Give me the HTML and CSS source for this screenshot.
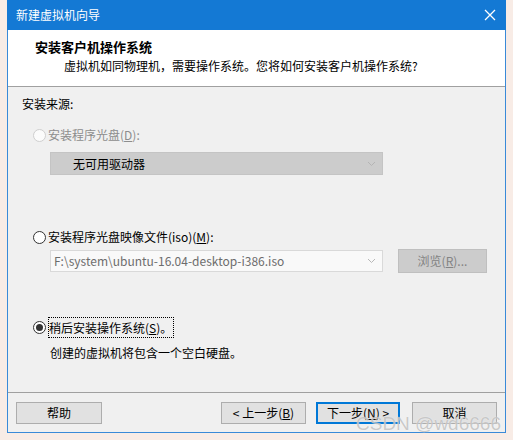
FILE: index.html
```html
<!DOCTYPE html>
<html lang="zh-CN">
<head>
    <meta charset="UTF-8">
    <meta name="viewport" content="width=device-width, initial-scale=1.0">
    <title>新建虚拟机向导</title>
    <link rel="stylesheet" href="styles.css">
</head>
<body>
    <div class="window">
        <div class="titlebar">
            <span class="title">新建虚拟机向导</span>
            <svg class="close" width="12" height="12" viewBox="0 0 12 12">
                <path d="M1 1 L11 11 M11 1 L1 11" stroke="#fff" stroke-width="1.3" fill="none"/>
            </svg>
        </div>

        <div class="header">
            <div class="header-title">安装客户机操作系统</div>
            <div class="header-sub">虚拟机如同物理机，需要操作系统。您将如何安装客户机操作系统?</div>
        </div>

        <div class="content">
            <div class="section-label">安装来源:</div>

            <div class="option disabled">
                <span class="radio"></span>
                <span class="label">安装程序光盘(<u>D</u>):</span>
            </div>
            <div class="combo combo-disabled">
                <span class="combo-text">无可用驱动器</span>
                <svg class="chevron" width="9" height="6" viewBox="0 0 9 6"><path d="M1 1 L4.5 4.5 L8 1" stroke="#b4b4b4" fill="none"/></svg>
            </div>

            <div class="option">
                <span class="radio"></span>
                <span class="label">安装程序光盘映像文件(iso)(<u>M</u>):</span>
            </div>
            <div class="file-row">
                <div class="combo combo-file">
                    <span class="combo-text">F:\system\ubuntu-16.04-desktop-i386.iso</span>
                    <svg class="chevron" width="9" height="6" viewBox="0 0 9 6"><path d="M1 1 L4.5 4.5 L8 1" stroke="#b8b8b8" fill="none"/></svg>
                </div>
                <button class="btn btn-disabled">浏览(<u>R</u>)...</button>
            </div>

            <div class="option checked">
                <span class="radio"></span>
                <span class="label focus">稍后安装操作系统(<u>S</u>)。</span>
            </div>
            <div class="hint">创建的虚拟机将包含一个空白硬盘。</div>
        </div>

        <div class="footer">
            <button class="btn help">帮助</button>
            <button class="btn">&lt; 上一步(<u>B</u>)</button>
            <button class="btn btn-default">下一步(<u>N</u>) &gt;</button>
            <button class="btn">取消</button>
        </div>
    </div>

    <div class="watermark">CSDN @wd6666</div>
</body>
</html>
```

FILE: styles.css
```css
* {
    margin: 0;
    padding: 0;
    box-sizing: border-box;
    font-family: "Noto Sans CJK SC", "Microsoft YaHei", sans-serif;
}

body {
    background: #f8ece6;
    width: 513px;
    height: 440px;
    overflow: hidden;
    position: relative;
    font-size: 12px;
    color: #000;
}

.window {
    margin-left: 7px;
    width: 499px;
    height: 433px;
    border: 1px solid #3a8ad8;
    border-top: none;
    background: #f0f0f0;
}

.titlebar {
    height: 30px;
    margin: 0 -1px;
    background: #1479d4;
    display: flex;
    align-items: center;
    justify-content: space-between;
    padding: 0 10px 0 9px;
}

.titlebar .title {
    color: #fff;
    font-size: 12px;
    line-height: 16px;
}

.close {
    display: block;
}

.header {
    height: 57px;
    background: #fff;
    border-bottom: 1px solid #a0a0a0;
    padding: 8px 0 0 27px;
}

.header-title {
    font-weight: bold;
    font-size: 13px;
    line-height: 18px;
}

.header-sub {
    margin-top: 1px;
    padding-left: 29px;
    line-height: 18px;
}

.content {
    height: 305px;
    padding-left: 14px;
}

.section-label {
    padding-top: 8px;
    line-height: 18px;
}

.option {
    display: flex;
    align-items: center;
    height: 18px;
    margin-left: 11px;
    margin-top: 13px;
}

.option:nth-of-type(4) {
    margin-top: 53px;
}

.option.checked {
    margin-top: 45px;
}

.radio {
    width: 13px;
    height: 13px;
    border: 1px solid #333;
    border-radius: 50%;
    background: #fff;
    margin-right: 2px;
    position: relative;
    flex-shrink: 0;
}

.checked .radio::after {
    content: "";
    position: absolute;
    left: 2px;
    top: 2px;
    width: 7px;
    height: 7px;
    border-radius: 50%;
    background: #333;
}

.label {
    line-height: 18px;
    white-space: nowrap;
}

.label.focus {
    outline: 1px dotted #000;
    outline-offset: -1px;
    padding: 2px 2px 2px 1px;
    line-height: 17px;
}

.disabled .radio {
    border-color: #cfcfcf;
    background: #fbfbfb;
}

.disabled .label {
    color: #8d8d8d;
}

.combo {
    width: 333px;
    height: 23px;
    margin-left: 28px;
    display: flex;
    align-items: center;
    justify-content: space-between;
    padding: 0 6px 0 22px;
}

.combo-disabled {
    margin-top: 8px;
    background: #cccccc;
    border: 1px solid #c4c4c4;
}

.file-row {
    display: flex;
    align-items: center;
    margin-top: 3px;
}

.combo-file {
    height: 22px;
    background: #f9f9f9;
    border: 1px solid #d9d9d9;
    padding-left: 3px;
    color: #6d6d6d;
}

.combo-text {
    line-height: 18px;
    white-space: nowrap;
}

.chevron {
    display: block;
}

.btn {
    height: 22px;
    width: 85px;
    background: #e1e1e1;
    border: 1px solid #adadad;
    font-size: 12px;
    line-height: 18px;
    color: #000;
}

.btn-disabled {
    margin-left: 15px;
    width: 89px;
    height: 24px;
    background: #cccccc;
    border-color: #bfbfbf;
    color: #838383;
}

.hint {
    margin-top: 8px;
    margin-left: 28px;
    line-height: 18px;
}

.footer {
    height: 40px;
    border-top: 1px solid #a0a0a0;
    display: flex;
    align-items: flex-start;
    padding: 9px 8px 0 8px;
    gap: 10px;
}

.footer .help {
    width: 86px;
    margin-right: auto;
}

.btn-default {
    width: 84px;
    border: 2px solid #0078d7;
    margin-right: 2px;
}

.watermark {
    position: absolute;
    left: 356px;
    top: 413px;
    font-family: "Liberation Sans", Arial, sans-serif;
    font-size: 19px;
    line-height: 22px;
    color: rgba(150, 150, 150, 0.5);
    text-shadow: 0 0 1px rgba(255, 255, 255, 0.9);
    white-space: nowrap;
}
```
